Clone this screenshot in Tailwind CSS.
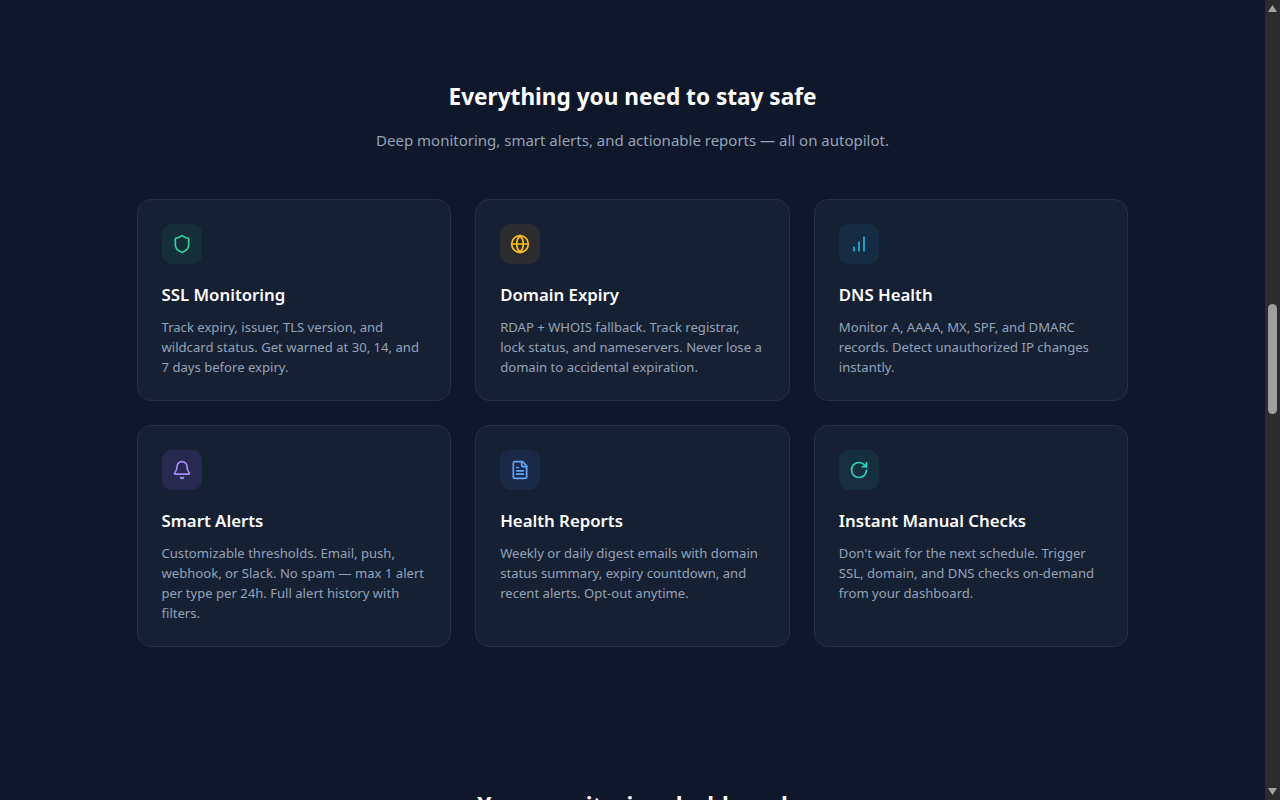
<!DOCTYPE html>
<html lang="en">
  <head>
    <meta charset="UTF-8" />
    <meta name="viewport" content="width=device-width, initial-scale=1.0" />
    <title>Features</title>
    <script src="https://cdn.jsdelivr.net/npm/@tailwindcss/browser@4"></script>
  </head>
  <body class="h-screen overflow-hidden bg-[#0f172a] font-['Noto_Sans',sans-serif] text-white">
    <div class="flex h-[800px]">
      <main class="flex-1 overflow-hidden">
        <!-- Features -->
        <section class="mx-auto max-w-[992px] pt-[81px]">
          <h2 class="text-center text-[22.6px] leading-8 font-bold">Everything you need to stay safe</h2>
          <p class="mt-[15px] text-center text-[15px] leading-6 text-[#94a3b8]">Deep monitoring, smart alerts, and actionable reports — all on autopilot.</p>

          <div class="mt-[47px] grid grid-cols-3 gap-6">
            <div class="rounded-[14px] border border-[#253044] bg-[#162033] p-6 pb-[23px]">
              <div class="mb-[17px] flex h-10 w-10 items-center justify-center rounded-[10px] bg-[#10b981]/10 text-[#34d399]">
                <svg class="h-5 w-5" viewBox="0 0 24 24" fill="none" stroke="currentColor" stroke-width="2" stroke-linecap="round" stroke-linejoin="round"><path d="M20 13c0 5-3.5 7.5-7.66 8.95a1 1 0 0 1-.67-.01C7.5 20.5 4 18 4 13V6a1 1 0 0 1 1-1c2 0 4.5-1.2 6.24-2.72a1.17 1.17 0 0 1 1.52 0C14.51 3.81 17 5 19 5a1 1 0 0 1 1 1z"/></svg>
              </div>
              <h3 class="mb-2 text-[16.8px] leading-7 font-semibold">SSL Monitoring</h3>
              <p class="text-[13.1px] leading-5 text-[#94a3b8]">Track expiry, issuer, TLS version, and wildcard status. Get warned at 30, 14, and 7 days before expiry.</p>
            </div>

            <div class="rounded-[14px] border border-[#253044] bg-[#162033] p-6 pb-[23px]">
              <div class="mb-[17px] flex h-10 w-10 items-center justify-center rounded-[10px] bg-[#f59e0b]/10 text-[#fbbf24]">
                <svg class="h-5 w-5" viewBox="0 0 24 24" fill="none" stroke="currentColor" stroke-width="2" stroke-linecap="round" stroke-linejoin="round"><circle cx="12" cy="12" r="10"/><path d="M12 2a14.5 14.5 0 0 0 0 20 14.5 14.5 0 0 0 0-20"/><path d="M2 12h20"/></svg>
              </div>
              <h3 class="mb-2 text-[16.8px] leading-7 font-semibold">Domain Expiry</h3>
              <p class="text-[13.1px] leading-5 text-[#94a3b8]">RDAP + WHOIS fallback. Track registrar, lock status, and nameservers. Never lose a domain to accidental expiration.</p>
            </div>

            <div class="rounded-[14px] border border-[#253044] bg-[#162033] p-6 pb-[23px]">
              <div class="mb-[17px] flex h-10 w-10 items-center justify-center rounded-[10px] bg-[#0ea5e9]/10 text-[#22b4dc]">
                <svg class="h-5 w-5" viewBox="0 0 24 24" fill="none" stroke="currentColor" stroke-width="2" stroke-linecap="round" stroke-linejoin="round"><path d="M6 20v-4"/><path d="M12 20V10"/><path d="M18 20V4"/></svg>
              </div>
              <h3 class="mb-2 text-[16.8px] leading-7 font-semibold">DNS Health</h3>
              <p class="text-[13.1px] leading-5 text-[#94a3b8]">Monitor A, AAAA, MX, SPF, and DMARC records. Detect unauthorized IP changes instantly.</p>
            </div>

            <div class="rounded-[14px] border border-[#253044] bg-[#162033] p-6 pb-[23px]">
              <div class="mb-[17px] flex h-10 w-10 items-center justify-center rounded-[10px] bg-[#8b5cf6]/15 text-[#a78bfa]">
                <svg class="h-5 w-5" viewBox="0 0 24 24" fill="none" stroke="currentColor" stroke-width="2" stroke-linecap="round" stroke-linejoin="round"><path d="M10.268 21a2 2 0 0 0 3.464 0"/><path d="M3.262 15.326A1 1 0 0 0 4 17h16a1 1 0 0 0 .74-1.673C19.41 13.956 18 12.499 18 8A6 6 0 0 0 6 8c0 4.499-1.411 5.956-2.738 7.326"/></svg>
              </div>
              <h3 class="mb-2 text-[16.8px] leading-7 font-semibold">Smart Alerts</h3>
              <p class="text-[13.1px] leading-5 text-[#94a3b8]">Customizable thresholds. Email, push, webhook, or Slack. No spam — max 1 alert per type per 24h. Full alert history with filters.</p>
            </div>

            <div class="rounded-[14px] border border-[#253044] bg-[#162033] p-6 pb-[23px]">
              <div class="mb-[17px] flex h-10 w-10 items-center justify-center rounded-[10px] bg-[#3b82f6]/10 text-[#60a5fa]">
                <svg class="h-5 w-5" viewBox="0 0 24 24" fill="none" stroke="currentColor" stroke-width="2" stroke-linecap="round" stroke-linejoin="round"><path d="M15 2H6a2 2 0 0 0-2 2v16a2 2 0 0 0 2 2h12a2 2 0 0 0 2-2V7Z"/><path d="M14 2v4a2 2 0 0 0 2 2h4"/><path d="M10 9H8"/><path d="M16 13H8"/><path d="M16 17H8"/></svg>
              </div>
              <h3 class="mb-2 text-[16.8px] leading-7 font-semibold">Health Reports</h3>
              <p class="text-[13.1px] leading-5 text-[#94a3b8]">Weekly or daily digest emails with domain status summary, expiry countdown, and recent alerts. Opt-out anytime.</p>
            </div>

            <div class="rounded-[14px] border border-[#253044] bg-[#162033] p-6 pb-[23px]">
              <div class="mb-[17px] flex h-10 w-10 items-center justify-center rounded-[10px] bg-[#14b8a6]/10 text-[#2dd4bf]">
                <svg class="h-5 w-5" viewBox="0 0 24 24" fill="none" stroke="currentColor" stroke-width="2" stroke-linecap="round" stroke-linejoin="round"><path d="M21 12a9 9 0 1 1-9-9c2.52 0 4.93 1 6.74 2.74L21 8"/><path d="M21 3v5h-5"/></svg>
              </div>
              <h3 class="mb-2 text-[16.8px] leading-7 font-semibold">Instant Manual Checks</h3>
              <p class="text-[13.1px] leading-5 text-[#94a3b8]">Don't wait for the next schedule. Trigger SSL, domain, and DNS checks on-demand from your dashboard.</p>
            </div>
          </div>

          <h2 class="mt-[143px] text-center text-[22.6px] leading-8 font-bold">Your monitoring dashboard</h2>
        </section>
      </main>

      <!-- Scrollbar -->
      <aside class="flex w-[15px] shrink-0 flex-col items-center bg-[#2c2c2c]">
        <svg class="mt-[5px] h-[7px] w-[9px] text-[#a3a3a3]" viewBox="0 0 9 7" fill="currentColor"><path d="M4.5 0 9 7H0z"/></svg>
        <div class="mt-[292px] h-[110px] w-[9px] rounded-full bg-[#9f9f9f]"></div>
        <svg class="mt-auto mb-[5px] h-[7px] w-[9px] text-[#a3a3a3]" viewBox="0 0 9 7" fill="currentColor"><path d="M0 0h9L4.5 7z"/></svg>
      </aside>
    </div>
  </body>
</html>
